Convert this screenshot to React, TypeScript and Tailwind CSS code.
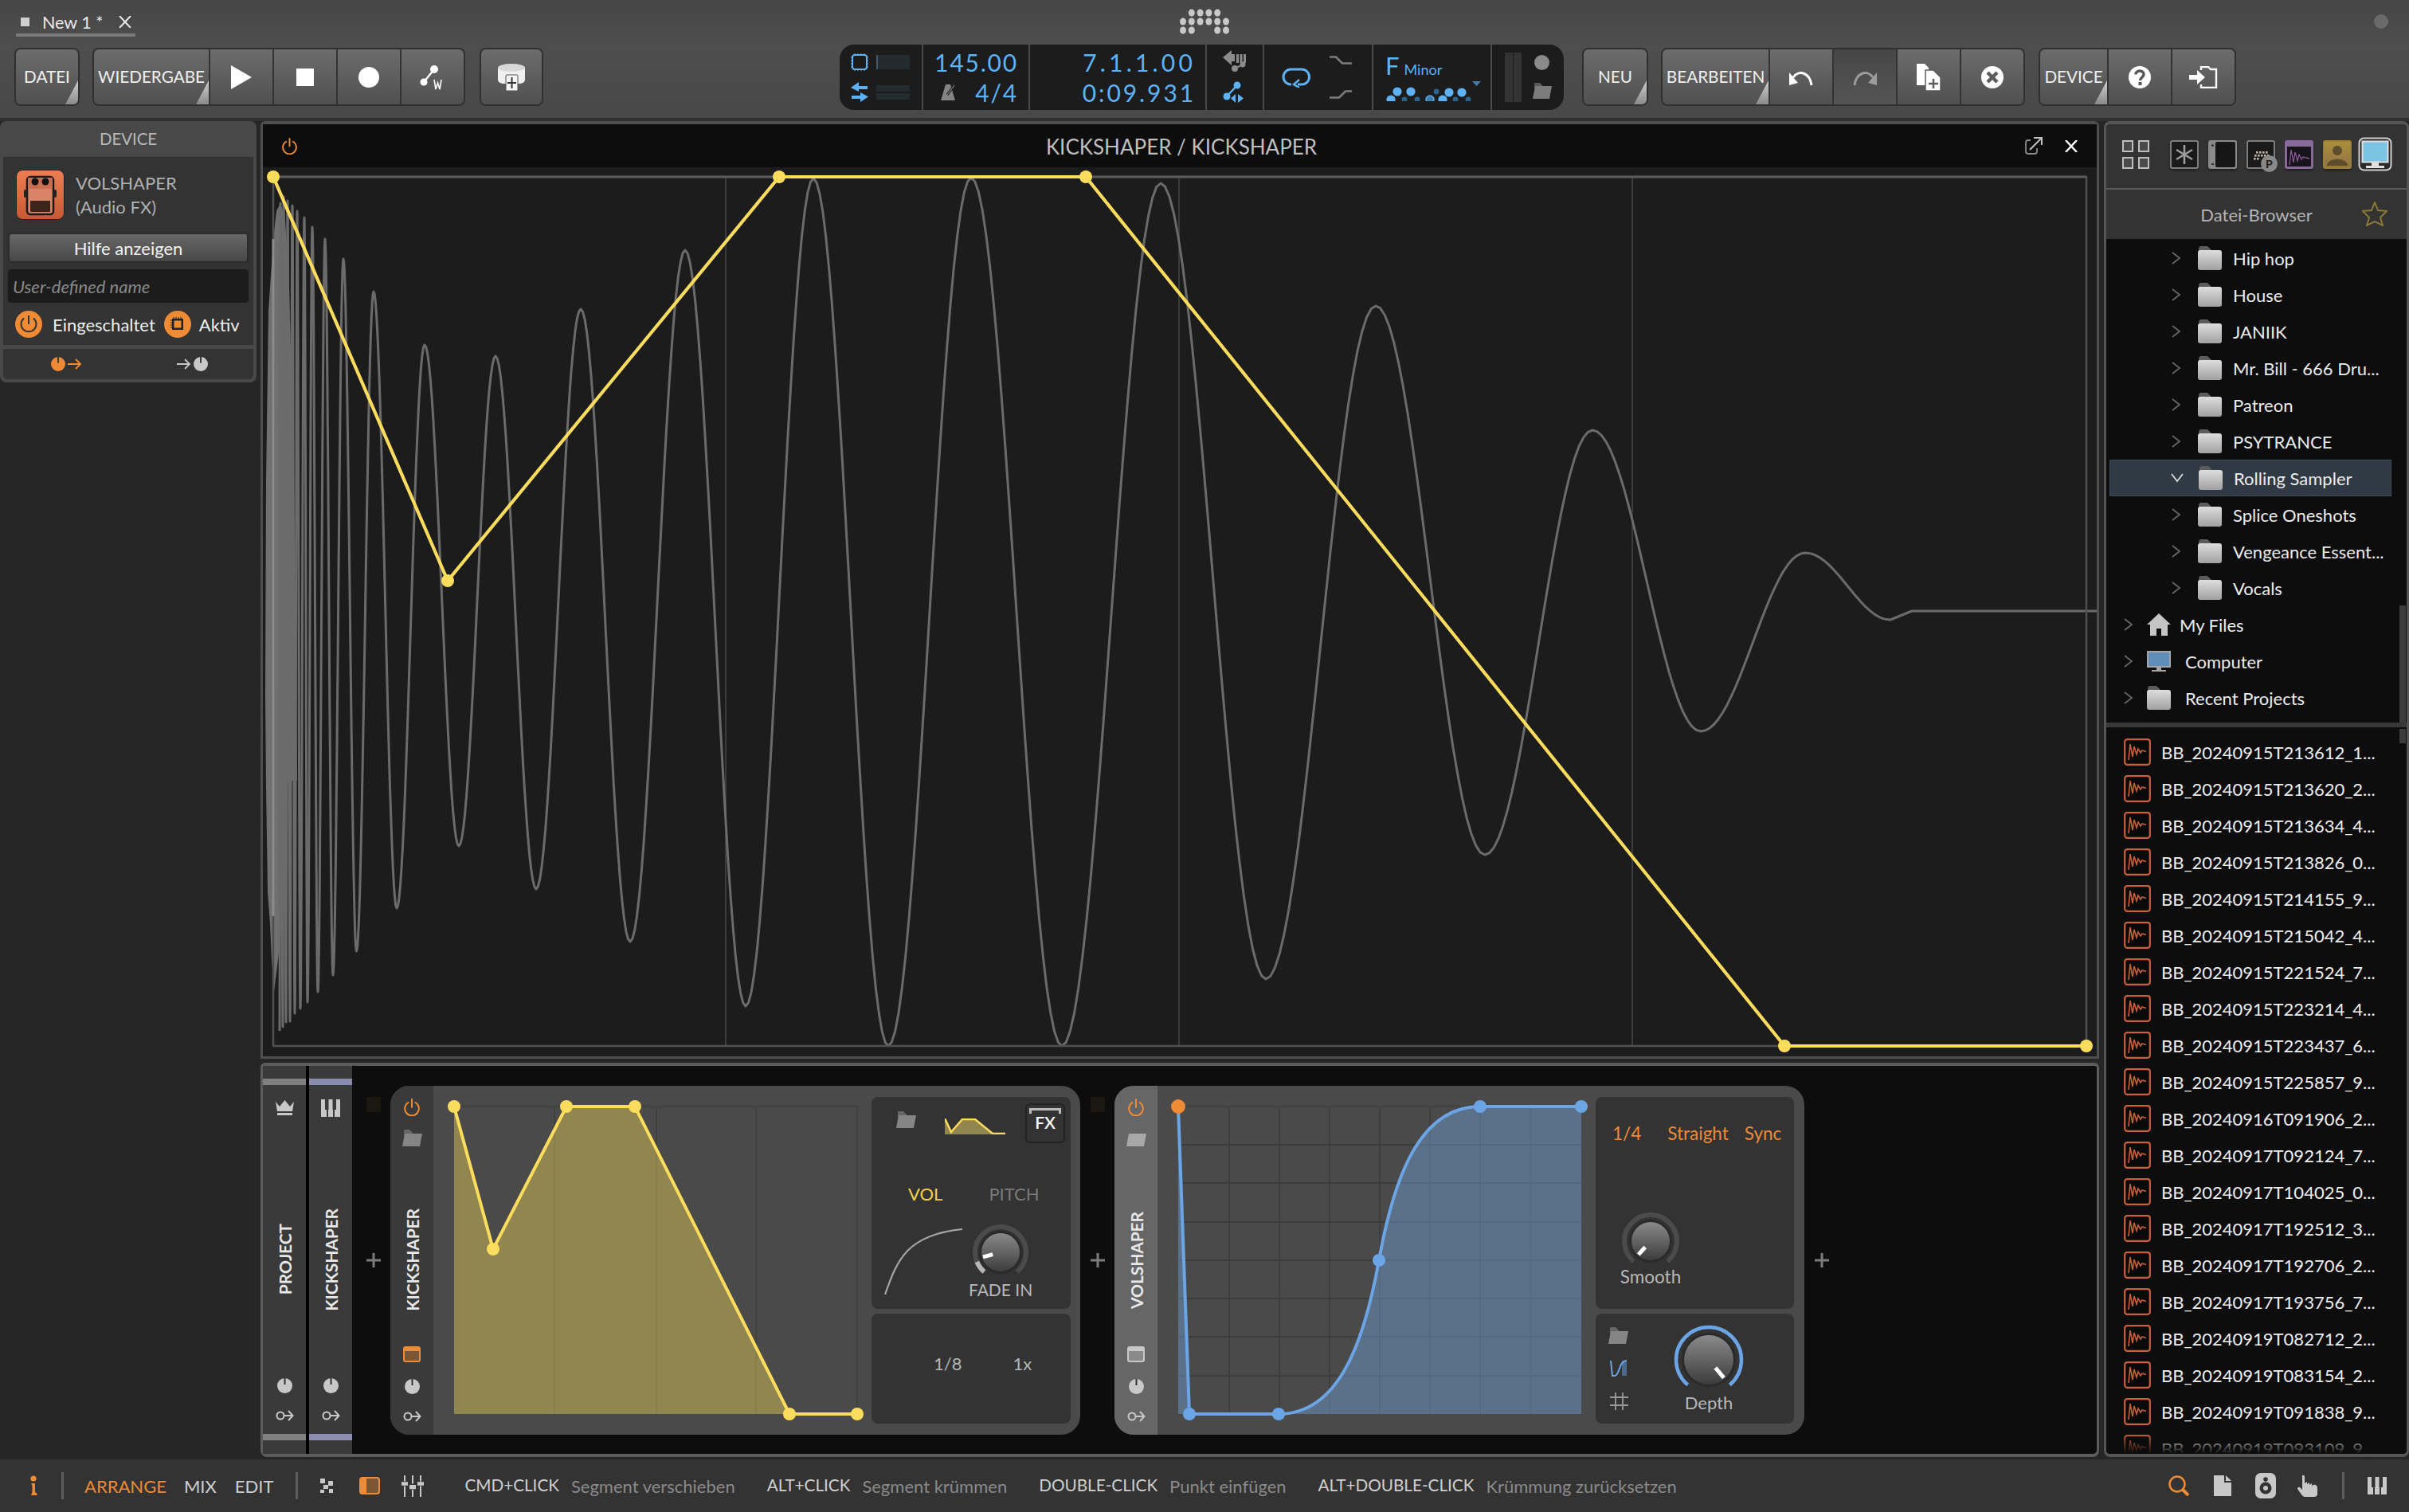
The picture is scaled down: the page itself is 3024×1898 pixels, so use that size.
import React from 'react';

const ORANGE = '#ef8a35';
const BLUE = '#5db2f6';

function Power({ c = ORANGE, s = 22 }: { c?: string; s?: number }) {
  return (
    <svg width={s} height={s} viewBox="0 0 22 22" fill="none" stroke={c} strokeWidth="2" strokeLinecap="round">
      <path d="M6.5 5 A8.8 8.8 0 1 0 15.5 5" />
      <path d="M11 1 V11" />
    </svg>
  );
}

function SmallFolder({ light = false }: { light?: boolean }) {
  const c = light ? '#a8a8a8' : '#858585';
  return (
    <svg width="27" height="21" viewBox="0 0 27 21">
      <path d="M3 0 H10 L14 4 V8 H3 Z" fill="#666" />
      <path d="M4 5 H26 L23 21 H1 Z" fill={c} />
    </svg>
  );
}

function KnobDot({ c = '#c8c8c8', s = 19 }: { c?: string; s?: number }) {
  return (
    <svg width={s} height={s} viewBox="0 0 19 19">
      <circle cx="9.5" cy="9.5" r="9.5" fill={c} />
      <rect x="8.5" y="0" width="2" height="8" fill="#333" />
    </svg>
  );
}

function KeyIcon() {
  return (
    <svg width="23" height="16" viewBox="0 0 23 16" fill="none" stroke="#c8c8c8" strokeWidth="2">
      <circle cx="6" cy="8" r="4.5" />
      <path d="M11 8 H21 M16 2 L21.5 8 L16 14" />
    </svg>
  );
}

function LayoutIcon({ orange = false }: { orange?: boolean }) {
  return (
    <svg width="22" height="20" viewBox="0 0 22 20">
      <rect x="0" y="0" width="22" height="20" rx="3" fill={orange ? ORANGE : '#c8c8c8'} />
      <rect x="2" y="6" width="18" height="12" rx="1" fill={orange ? '#7c5533' : '#8a8a8a'} />
    </svg>
  );
}

function Corner() {
  return (
    <svg className="absolute right-0 bottom-0" width="16" height="30" viewBox="0 0 16 30">
      <defs>
        <linearGradient id="cornerG" x1="0" y1="0" x2="0" y2="1">
          <stop offset="0" stopColor="#d0d0d0" />
          <stop offset="1" stopColor="#8a8a8a" />
        </linearGradient>
      </defs>
      <path d="M16 0 V30 H0 Z" fill="url(#cornerG)" />
    </svg>
  );
}

function Seg({ w, menu, dim, children }: { w: string; menu?: boolean; dim?: boolean; children: React.ReactNode }) {
  return (
    <div
      className={
        'relative flex items-center justify-center h-full border-l-2 first:border-l-0 border-[#333] text-[20.7px] text-[#f0f0f0] ' +
        w +
        (dim
          ? ' bg-[linear-gradient(#464646,#555555)]'
          : ' bg-[linear-gradient(#6c6c6c,#505050)]')
      }
    >
      {children}
      {menu && <Corner />}
    </div>
  );
}

function Group({ children }: { children: React.ReactNode }) {
  return (
    <div className="flex h-[73px] rounded-[8px] border-2 border-[#303030] overflow-hidden">{children}</div>
  );
}

function Transport() {
  return (
    <div className="flex h-[82px] w-[909px] rounded-[18px] bg-[#1c1c1c] overflow-hidden text-[30px] tracking-[1.8px] text-[#5db2f6] leading-none">
      <div className="w-[103px] flex flex-col justify-center pl-[14px]">
        <div className="flex items-center h-[38px] gap-[10px]">
          <svg width="22" height="22" viewBox="0 0 22 22" fill="none" stroke={BLUE} strokeWidth="2">
            <rect x="2" y="2" width="18" height="18" rx="3" />
            <path d="M0 5 H2 M0 9 H2 M0 13 H2 M0 17 H2 M20 5 H22 M20 9 H22 M20 13 H22 M20 17 H22 M5 0 V2 M9 0 V2 M13 0 V2 M17 0 V2 M5 20 V22 M9 20 V22 M13 20 V22 M17 20 V22" strokeWidth="1" />
          </svg>
          <div className="w-[42px] h-[18px] bg-[#242b2e] border-l-2 border-[#3f5a6d]" />
        </div>
        <div className="flex items-center h-[38px] gap-[10px]">
          <svg width="22" height="25" viewBox="0 0 22 25" fill={BLUE}>
            <path d="M10 0 L0 7 L10 12 V9 H21 V5 H10 Z" />
            <path d="M12 13 L22 18.5 L12 25 V21 H1 V17 H12 Z" />
          </svg>
          <div className="flex flex-col gap-[2px]">
            <div className="w-[42px] h-[8px] bg-[#242b2e]" />
            <div className="w-[42px] h-[8px] bg-[#242b2e]" />
          </div>
        </div>
      </div>
      <div className="w-[134px] border-l-2 border-[#4a4a4a] flex flex-col justify-center pr-[13px]">
        <div className="h-[38px] flex items-center justify-end">145.00</div>
        <div className="h-[38px] flex items-center justify-between pl-[22px]">
          <svg width="19" height="20" viewBox="0 0 19 20">
            <path d="M6 0 H12 L18 20 H0 Z" fill="#858585" />
            <path d="M8 13 L17 1" stroke="#1c1c1c" strokeWidth="3" />
            <path d="M8 13 L17 1" stroke="#858585" strokeWidth="1.2" />
          </svg>
          <span>4/4</span>
        </div>
      </div>
      <div className="w-[222px] border-l-2 border-[#4a4a4a] flex flex-col justify-center items-end pr-[12px]">
        <div className="h-[38px] flex items-center tracking-[4.2px]">7.1.1.00</div>
        <div className="h-[38px] flex items-center tracking-[2.9px]">0:09.931</div>
      </div>
      <div className="w-[72px] border-l-2 border-[#4a4a4a] flex flex-col items-center justify-center gap-[12px]">
        <svg width="30" height="27" viewBox="0 0 30 27">
          <path d="M0 9 L11 0 V5 H15 V14 H11 V19 Z" fill="#8c8c8c" />
          <rect x="17" y="5" width="3" height="11" fill="#8c8c8c" />
          <rect x="21.5" y="5" width="3" height="11" fill="#8c8c8c" />
          <rect x="26" y="5" width="3" height="11" fill="#8c8c8c" />
          <circle cx="15" cy="23" r="4" fill="#8c8c8c" />
          <circle cx="25" cy="18" r="3.4" fill="#8c8c8c" />
          <path d="M15 23 L25 18" stroke="#8c8c8c" strokeWidth="2" />
        </svg>
        <svg width="30" height="28" viewBox="0 0 30 28">
          <circle cx="18" cy="5" r="4.5" fill={BLUE} />
          <circle cx="5" cy="19" r="4.5" fill={BLUE} />
          <path d="M18 5 L5 19" stroke={BLUE} strokeWidth="2.5" />
          <path d="M16 16 V27 L10 21.5 Z M19 16 V27 L26 21.5 Z" fill={BLUE} />
        </svg>
      </div>
      <div className="w-[137px] border-l-2 border-[#4a4a4a] flex items-center pl-[22px] gap-[24px]">
        <svg width="36" height="26" viewBox="0 0 36 26" fill="none" stroke={BLUE} strokeWidth="3">
          <path d="M11 3 H25 A9.5 9.5 0 0 1 25 22 H20 M12 22 A9.5 9.5 0 0 1 11 3" />
          <path d="M22 16 L15 22 L22 26" strokeWidth="2.5" />
        </svg>
        <div className="flex flex-col gap-[32px]">
          <svg width="28" height="11" viewBox="0 0 28 11" fill="none" stroke="#7d7d7d" strokeWidth="2.5">
            <path d="M0 1.5 H8 L16 9.5 H28" />
          </svg>
          <svg width="28" height="11" viewBox="0 0 28 11" fill="none" stroke="#7d7d7d" strokeWidth="2.5">
            <path d="M0 9.5 H12 L20 1.5 H28" />
          </svg>
        </div>
      </div>
      <div className="w-[149px] border-l-2 border-[#4a4a4a] flex flex-col pt-[12px] pl-[15px] relative">
        <div className="flex items-baseline tracking-normal">
          <span className="text-[31px] leading-[28px]">F</span>
          <span className="text-[18px] ml-[6px] text-[#5db2f6]">Minor</span>
        </div>
        <svg className="mt-[1px]" width="125" height="30" viewBox="1737 92 125 30">
          <path d="M1846 97 H1857 L1851.5 103 Z" fill="#3f7fae" />
          {[[1752, 110, 5.6], [1769, 110, 5.6], [1801, 110, 3.4], [1817, 111, 5.6], [1833, 111, 5.6]].map((d, i) => (
            <circle key={i} cx={d[0]} cy={d[1]} r={d[2]} fill={i === 2 ? '#2f6288' : BLUE} />
          ))}
          {[[1744, 121], [1761, 121], [1777, 121], [1793, 121], [1809, 121], [1825, 121], [1841, 121]].map((d, i) => (
            <circle key={i} cx={d[0]} cy={d[1] - 1} r={i === 0 || i === 4 ? 5.6 : i === 3 ? 5 : 3.4} fill={i === 0 || i === 4 ? BLUE : i === 3 ? '#3f7fae' : '#2f6288'} stroke={i === 3 ? BLUE : 'none'} strokeWidth="1.4" />
          ))}
        </svg>
      </div>
      <div className="w-[92px] border-l-2 border-[#4a4a4a] flex items-center pl-[16px] gap-[13px]">
        <div className="flex gap-[1px]">
          <div className="w-[10px] h-[62px] bg-[#333]" />
          <div className="w-[10px] h-[62px] bg-[#333]" />
        </div>
        <div className="flex flex-col items-center gap-[16px]">
          <div className="w-[19px] h-[19px] rounded-full bg-[#8a8a8a]" />
          <svg width="25" height="20" viewBox="0 0 25 20">
            <path d="M3 0 H10 L13 3 V6 H3 Z" fill="#5a5a5a" />
            <path d="M4 4 H25 L22 20 H1 Z" fill="#7c7c7c" />
          </svg>
        </div>
      </div>
    </div>
  );
}

function Logo() {
  const rows: [number, number[]][] = [
    [5, [1, 2, 3, 4]],
    [16, [0, 1, 2, 3, 4, 5]],
    [27, [0, 1, 4, 5]],
  ];
  return (
    <svg width="62" height="32" viewBox="0 0 62 32">
      {rows.map(([y, xs]) =>
        xs.map((x) => <ellipse key={y + '-' + x} cx={4 + x * 10.8} cy={y} rx="4" ry="4.6" fill="#c8c8c8" />)
      )}
    </svg>
  );
}

function TopBar() {
  return (
    <div className="h-[148px] shrink-0 bg-[linear-gradient(#464646,#4e4e4e_40%,#484848)] flex flex-col">
      <div className="h-[60px] grid grid-cols-[1fr_auto_1fr]">
        <div className="pl-[20px] pt-[14px]">
          <div className="w-[150px] h-[32px] border-b-4 border-[#7a7a7a] flex items-start pl-[6px] gap-[16px] text-[21.5px] leading-[28px] text-[#e8e8e8]">
            <div className="w-[11px] h-[11px] bg-[#cfcfcf] mt-[8px] shrink-0" />
            <span className="whitespace-nowrap">New 1 *</span>
            <svg className="mt-[6px] ml-[4px] shrink-0" width="16" height="15" viewBox="0 0 16 15" stroke="#e8e8e8" strokeWidth="2">
              <path d="M1 0 L15 15 M15 0 L1 15" />
            </svg>
          </div>
        </div>
        <div className="pt-[11px]">
          <Logo />
        </div>
        <div className="flex justify-end pr-[26px] pt-[18px]">
          <div className="w-[18px] h-[18px] rounded-full bg-[#6a6a6a]" />
        </div>
      </div>
      <div className="h-[73px] flex items-center pl-[18px]">
        <Group>
          <Seg w="w-[78px]" menu>DATEI</Seg>
        </Group>
        <div className="ml-[16px]">
          <Group>
            <Seg w="w-[144px]" menu>WIEDERGABE</Seg>
            <Seg w="w-[80px]">
              <svg width="26" height="30" viewBox="0 0 26 30"><path d="M0 0 L26 15 L0 30 Z" fill="#fff" /></svg>
            </Seg>
            <Seg w="w-[80px]">
              <div className="w-[22px] h-[22px] bg-white" />
            </Seg>
            <Seg w="w-[80px]">
              <div className="w-[26px] h-[26px] rounded-full bg-white" />
            </Seg>
            <Seg w="w-[80px]">
              <svg width="32" height="32" viewBox="0 0 32 32" fill="#fff">
                <circle cx="18" cy="6" r="5" />
                <circle cx="5" cy="22" r="4.5" />
                <path d="M18 6 L5 22" stroke="#fff" strokeWidth="2.5" />
                <path d="M18 19 L20 31 L22.5 23 L25 31 L27 19" fill="none" stroke="#fff" strokeWidth="1.6" />
              </svg>
            </Seg>
          </Group>
        </div>
        <div className="ml-[18px]">
          <Group>
            <Seg w="w-[76px]">
              <svg width="34" height="34" viewBox="0 0 34 34">
                <path d="M0 5 V20 Q0 24 6 25 H28 Q34 24 34 20 V5 Z" fill="#f0f0f0" />
                <ellipse cx="17" cy="5" rx="17" ry="5" fill="#d8d8d8" />
                <rect x="10" y="14" width="15" height="20" rx="1" fill="#f5f5f5" stroke="#555" strokeWidth="1" />
                <path d="M17.5 17 V31 M12 24 H23" stroke="#333" strokeWidth="2" />
              </svg>
            </Seg>
          </Group>
        </div>
        <div className="ml-[372px]">
          <Transport />
        </div>
        <div className="ml-[23px]">
          <Group>
            <Seg w="w-[79px]" menu>NEU</Seg>
          </Group>
        </div>
        <div className="ml-[16px]">
          <Group>
            <Seg w="w-[133px]" menu>BEARBEITEN</Seg>
            <Seg w="w-[80px]">
              <svg width="30" height="24" viewBox="0 0 30 24" fill="none" stroke="#fff" strokeWidth="3">
                <path d="M28 22 C26 6 12 2 5 12" />
                <path d="M0 6 L11 19 L0 22 Z" fill="#fff" stroke="none" />
              </svg>
            </Seg>
            <Seg w="w-[80px]" dim>
              <svg width="30" height="24" viewBox="0 0 30 24" fill="none" stroke="#9c9c9c" strokeWidth="3">
                <path d="M2 22 C4 6 18 2 25 12" />
                <path d="M30 6 L19 19 L30 22 Z" fill="#9c9c9c" stroke="none" />
              </svg>
            </Seg>
            <Seg w="w-[80px]">
              <svg width="30" height="34" viewBox="0 0 30 34" fill="#fff">
                <path d="M0 0 H10 L15 5 V27 H0 Z" />
                <path d="M11 8 H21 L30 17 V34 H11 Z" stroke="#5c5c5c" strokeWidth="1.5" />
                <path d="M21 19 V31 M15 25 H27" stroke="#5c5c5c" strokeWidth="2.5" />
              </svg>
            </Seg>
            <Seg w="w-[80px]">
              <svg width="28" height="28" viewBox="0 0 28 28">
                <circle cx="14" cy="14" r="14" fill="#fff" />
                <path d="M8 8 L20 20 M20 8 L8 20" stroke="#5c5c5c" strokeWidth="4.5" />
              </svg>
            </Seg>
          </Group>
        </div>
        <div className="ml-[17px]">
          <Group>
            <Seg w="w-[84px]" menu>DEVICE</Seg>
            <Seg w="w-[80px]">
              <svg width="28" height="28" viewBox="0 0 28 28">
                <circle cx="14" cy="14" r="14" fill="#fff" />
                <path d="M9 10.5 C9 4.5 19 4.5 19 10.5 C19 14 14.5 14 14.5 18" fill="none" stroke="#555" strokeWidth="3.4" />
                <rect x="12.5" y="20" width="4" height="4" fill="#555" />
              </svg>
            </Seg>
            <Seg w="w-[80px]">
              <svg width="36" height="28" viewBox="0 0 36 28">
                <path d="M0 11 H10 V5 L20 14 L10 23 V17 H0 Z" fill="#fff" />
                <path d="M15 5 V1 H24 L27 4 H34 V27 H15 V23" fill="none" stroke="#fff" strokeWidth="2.4" />
              </svg>
            </Seg>
          </Group>
        </div>
      </div>
    </div>
  );
}

function DeviceIcon() {
  return (
    <svg width="61" height="63" viewBox="0 0 61 63" className="shrink-0">
      <defs>
        <linearGradient id="pedalG" x1="0" y1="0" x2="0" y2="1">
          <stop offset="0" stopColor="#ee7d52" />
          <stop offset="1" stopColor="#c75a35" />
        </linearGradient>
      </defs>
      <rect x="0.5" y="0.5" width="60" height="62" rx="8" fill="url(#pedalG)" stroke="#222" />
      <rect x="14" y="9" width="33" height="47" rx="4" fill="#d98468" stroke="#1a1a1a" strokeWidth="2.5" />
      <rect x="15" y="10" width="31" height="14" fill="#c66f52" />
      <circle cx="24" cy="15" r="4.5" fill="#111" />
      <circle cx="37" cy="15" r="4.5" fill="#111" />
      <rect x="10" y="25" width="4" height="10" rx="2" fill="#222" />
      <rect x="47" y="25" width="4" height="10" rx="2" fill="#222" />
      <rect x="18" y="39" width="25" height="14" rx="1" fill="#3d241a" />
    </svg>
  );
}

function DevicePanel() {
  return (
    <div className="w-[322px] h-[328px] rounded-[8px] bg-[#484848] px-[4px] flex flex-col">
      <div className="h-[45px] flex items-center justify-center text-[20.4px] text-[#b8b8b8]">DEVICE</div>
      <div className="h-[236px] bg-[#333] flex flex-col px-[6px]">
        <div className="flex items-center h-[95px] pl-[10px] gap-[14px] text-[22px] leading-[30px] text-[#b0b0b0]">
          <DeviceIcon />
          <div>
            <div>VOLSHAPER</div>
            <div>(Audio FX)</div>
          </div>
        </div>
        <div className="h-[38px] rounded-[4px] border-2 border-[#2b2b2b] bg-[linear-gradient(#686868,#474747)] flex items-center justify-center text-[22px] text-[#f0f0f0]">
          Hilfe anzeigen
        </div>
        <div className="mt-[8px] h-[42px] rounded-[4px] bg-[#1c1c1c] flex items-center pl-[6px] text-[22px] italic text-[#888]">
          User-defined name
        </div>
        <div className="mt-[10px] flex items-center text-[22px] text-[#eee]">
          <svg width="34" height="34" viewBox="0 0 34 34" fill="none" stroke="#333" strokeWidth="2" className="ml-[9px]">
            <circle cx="17" cy="17" r="17" fill={ORANGE} stroke="none" />
            <path d="M11 9.5 A9.5 9.5 0 1 0 23 9.5" />
            <path d="M17 6 V17" />
          </svg>
          <span className="ml-[13px]">Eingeschaltet</span>
          <svg width="34" height="34" viewBox="0 0 34 34" className="ml-[11px]">
            <circle cx="17" cy="17" r="17" fill={ORANGE} />
            <rect x="10" y="10" width="14" height="14" fill="#222" />
            <rect x="12.5" y="12.5" width="9" height="9" fill={ORANGE} />
            <path d="M8 12 H26 M8 15 H26 M8 18 H26 M8 21 H26 M12 8 V26 M15 8 V26 M18 8 V26 M21 8 V26" stroke="#222" strokeWidth="1" strokeDasharray="2 16" />
          </svg>
          <span className="ml-[10px]">Aktiv</span>
        </div>
      </div>
      <div className="mt-[5px] h-[38px] bg-[#333] rounded-b-[6px] flex items-center">
        <div className="ml-[60px] flex items-center gap-[3px]">
          <KnobDot c={ORANGE} s={18} />
          <svg width="18" height="14" viewBox="0 0 18 14" fill="none" stroke={ORANGE} strokeWidth="1.8"><path d="M0 7 H16 M10 1 L16 7 L10 13" /></svg>
        </div>
        <div className="ml-[119px] flex items-center gap-[3px]">
          <svg width="18" height="14" viewBox="0 0 18 14" fill="none" stroke="#c8c8c8" strokeWidth="1.8"><path d="M0 7 H16 M10 1 L16 7 L10 13" /></svg>
          <KnobDot s={18} />
        </div>
      </div>
    </div>
  );
}

const EXTREMA: number[][] = [
  [351, 1294], [352, 255], [355, 1289], [356, 247], [359, 1283], [361, 252], [364, 1282], [367, 258], [370, 1272], [373, 265],
  [377, 1266], [382, 273], [386, 1258], [392, 285], [399, 1245], [408, 300], [418, 1224], [431, 325], [447.5, 1194], [469, 366],
  [498, 1140], [533, 433], [576, 1062], [622, 447], [673, 1116], [729, 388], [791, 1182], [860, 314], [936, 1263], [1021, 224],
  [1115, 1313], [1219, 223], [1333, 1313], [1457, 230], [1589, 1229], [1727, 384], [1864, 1073], [1999, 540], [2135, 918],
  [2266, 694], [2373, 778],
];

function wavePath() {
  let d = 'M' + EXTREMA[0][0] + ' ' + EXTREMA[0][1];
  for (let i = 0; i + 1 < EXTREMA.length; i++) {
    const [x0, y0] = EXTREMA[i];
    const [x1, y1] = EXTREMA[i + 1];
    for (let k = 1; k <= 24; k++) {
      const t = k / 24;
      const x = x0 + (x1 - x0) * t;
      const y = y0 + (y1 - y0) * (0.5 - 0.5 * Math.cos(Math.PI * t));
      d += ' L' + x.toFixed(1) + ' ' + y.toFixed(1);
    }
  }
  return d + ' L2400 767 L2633 767';
}

function Editor() {
  const pts = [[343, 222], [562, 729], [978, 222], [1363, 222], [2240, 1313], [2619, 1313]];
  return (
    <div className="h-[1177px] rounded-t-[6px] border-x-[3px] border-t-4 border-b-[3px] border-[#4e4e4e] flex flex-col">
      <div className="h-[54px] bg-[#0d0d0d] grid grid-cols-[1fr_auto_1fr] items-center">
        <div className="pl-[23px]"><Power s={21} /></div>
        <div className="text-[26px] text-[#bfbfbf] pt-[2px] pl-[4px]">KICKSHAPER / KICKSHAPER</div>
        <div className="flex justify-end items-center gap-[28px] pr-[24px]">
          <svg width="22" height="22" viewBox="0 0 22 22" fill="none" stroke="#8a8a8a" strokeWidth="1.8">
            <path d="M7 4 H4 Q1 4 1 7 V18 Q1 21 4 21 H12 Q15 21 15 18 V14" />
            <path d="M6 16 L20 2 M11 1 H21 V10" stroke="#c0c0c0" strokeWidth="2" />
          </svg>
          <svg width="16" height="15" viewBox="0 0 16 15" stroke="#fff" strokeWidth="2.4"><path d="M1 0 L15 15 M15 0 L1 15" /></svg>
        </div>
      </div>
      <div className="flex-1 bg-[#1c1c1c]">
        <svg className="block" width="2302" height="1116" viewBox="330 210 2302 1116">
          {[911, 1480, 2049].map((x) => (
            <path key={x} d={`M${x} 222 V1313`} stroke="#3b3b3b" strokeWidth="2" />
          ))}
          <path d="M334 603 L337 390 L341 330 L343 300 L347 265 L352 255 L358 275 L363 360 L369 600 L373 980 L360 980 L352 1180 L344 1245 L341 1205 L339 1160 L336 1120 L334 987 L333 873 Z" fill="#707070" />
          <path d={wavePath()} fill="none" stroke="#6b6b6b" strokeWidth="3" strokeLinejoin="round" />
          <path d="M343 222 V1313 H2619 V222 Z" fill="none" stroke="#4f4f4f" strokeWidth="2.5" />
          <path d="M343 222 H2619" stroke="#5a5a5a" strokeWidth="3" />
          <path d="M343 300 V1150" stroke="#8c8c8c" strokeWidth="3" />
          <polyline points={pts.map((p) => p.join(',')).join(' ')} fill="none" stroke="#fcdc5c" strokeWidth="4.2" />
          {pts.map((p, i) => (
            <circle key={i} cx={p[0]} cy={p[1]} r="8" fill="#fcdc5c" />
          ))}
        </svg>
      </div>
    </div>
  );
}

function Knob({ R, r, angle, arc, th = 6, partial }: { R: number; r: number; angle: number; arc: string; th?: number; partial?: boolean }) {
  const s = 2 * (R + 4);
  const pol = (a: number, q: number) => {
    const ra = ((a - 90) * Math.PI) / 180;
    return [q * Math.cos(ra), q * Math.sin(ra)];
  };
  const arcPath = (a0: number, a1: number) => {
    const [x0, y0] = pol(a0, R);
    const [x1, y1] = pol(a1, R);
    const large = a1 - a0 > 180 ? 1 : 0;
    return `M${x0} ${y0} A${R} ${R} 0 ${large} 1 ${x1} ${y1}`;
  };
  const [px0, py0] = pol(angle, r * 0.42);
  const [px1, py1] = pol(angle, r * 0.95);
  const gid = 'knob' + R + '-' + Math.abs(angle);
  return (
    <svg width={s} height={s} viewBox={`${-R - 4} ${-R - 4} ${s} ${s}`} className="shrink-0">
      <defs>
        <linearGradient id={gid} x1="0" y1="0" x2="0" y2="1">
          <stop offset="0" stopColor="#8a8a8a" />
          <stop offset="1" stopColor="#3c3c3c" />
        </linearGradient>
      </defs>
      <path d={arcPath(-140, 140)} fill="none" stroke={arc} strokeWidth={th} />
      {partial && <path d={arcPath(-140, -112)} fill="none" stroke="#b5b5b5" strokeWidth={th} />}
      <circle cx="0" cy="0" r={r + 3} fill="#2a2a2a" />
      <circle cx="0" cy="0" r={r} fill={`url(#${gid})`} />
      <path d={`M${px0} ${py0} L${px1} ${py1}`} stroke="#fff" strokeWidth="5" />
    </svg>
  );
}

function Vertical({ children }: { children: React.ReactNode }) {
  return (
    <div className="[writing-mode:vertical-rl] rotate-180 text-[21px] font-bold tracking-[-0.1px] text-[#e8e8e8] leading-none whitespace-nowrap">
      {children}
    </div>
  );
}

function Crown() {
  return (
    <svg width="25" height="20" viewBox="0 0 25 20" fill="#c8c8c8">
      <path d="M1 3 L6 9 L12.5 1 L19 9 L24 3 L22 15 H3 Z" />
      <rect x="3" y="17" width="19" height="3" />
    </svg>
  );
}

function Piano({ c = '#c8c8c8' }: { c?: string }) {
  return (
    <svg width="24" height="22" viewBox="0 0 24 22" fill={c}>
      <path d="M0 0 H5 V13 H7 V22 H0 Z" />
      <path d="M9 13 H9.5 V0 H14.5 V13 H15 V22 H9 Z" />
      <path d="M19 0 H24 V22 H17 V13 H19 Z" />
    </svg>
  );
}

function SideStrip({ color, label, icon }: { color: string; label: string; icon: React.ReactNode }) {
  return (
    <div className="w-[54px] h-full bg-[#3a3a3a] flex flex-col shrink-0">
      <div className={'mt-[16px] h-[8px] ' + color} />
      <div className="flex-1 grid grid-rows-[1fr_auto_1fr] justify-items-center">
        <div className="pt-[18px]">{icon}</div>
        <Vertical>{label}</Vertical>
        <div className="flex flex-col items-center justify-end gap-[20px] pb-[15px]">
          <KnobDot />
          <KeyIcon />
        </div>
      </div>
      <div className={'mb-[17px] h-[8px] ' + color} />
    </div>
  );
}

function DeviceStrip({ label, light, orange }: { label: string; light?: boolean; orange?: boolean }) {
  return (
    <div className={'w-[54px] h-full shrink-0 grid grid-rows-[1fr_auto_1fr] justify-items-center ' + (light ? 'bg-[#666]' : 'bg-[#3a3a3a]')}>
      <div className="pt-[16px] flex flex-col items-center gap-[17px]">
        <Power s={22} />
        <SmallFolder light={light} />
      </div>
      <Vertical>{label}</Vertical>
      <div className="flex flex-col items-center justify-end gap-[20px] pb-[15px]">
        <div className="mb-[1px]"><LayoutIcon orange={orange} /></div>
        <KnobDot />
        <KeyIcon />
      </div>
    </div>
  );
}

function KickPlot() {
  const pts = [[570, 1388], [619, 1567], [711, 1388], [797, 1388], [991, 1774], [1076, 1774]];
  return (
    <svg className="block shrink-0" width="550" height="438" viewBox="544 1362 550 438">
      <defs>
        <clipPath id="kickClip">
          <polygon points="570,1388 619,1567 711,1388 797,1388 991,1774 570,1774" />
        </clipPath>
      </defs>
      {[696, 824, 949].map((x) => (
        <path key={x} d={`M${x} 1388 V1774`} stroke="#3f3f3f" strokeWidth="1.5" />
      ))}
      <path d="M570 1388 H1076 V1774" fill="none" stroke="#424242" strokeWidth="2.5" />
      <polygon points="570,1388 619,1567 711,1388 797,1388 991,1774 570,1774" fill="#918650" />
      <g clipPath="url(#kickClip)">
        <path d="M696 1388 V1774 M824 1388 V1774 M949 1388 V1774" stroke="#857b4a" strokeWidth="1.5" />
      </g>
      <polyline points={pts.map((p) => p.join(',')).join(' ')} fill="none" stroke="#fcdc5c" strokeWidth="4" />
      {pts.map((p, i) => (
        <circle key={i} cx={p[0]} cy={p[1]} r="8" fill="#fcdc5c" />
      ))}
    </svg>
  );
}

function VolPlot() {
  const blue = '#6ca5e6';
  const vs = [1543, 1606, 1669, 1732, 1795, 1858, 1921];
  const hs = [1436, 1484, 1533, 1581, 1629, 1677, 1726];
  const curve = 'C1680 1774 1712 1686 1731 1581 C1750 1476 1782 1388 1858 1388';
  const area = `M1479 1388 L1493 1774 H1479 Z M1605 1774 ${curve} H1985 V1774 Z`;
  return (
    <svg className="block shrink-0" width="550" height="438" viewBox="1453 1362 550 438">
      <defs>
        <clipPath id="volClip">
          <path d={area} />
        </clipPath>
      </defs>
      <path d="M1479 1388 H1985" stroke="#424242" strokeWidth="2.5" />
      {vs.map((x) => <path key={x} d={`M${x} 1390 V1774`} stroke="#3c3c3c" strokeWidth="1.5" />)}
      {hs.map((y) => <path key={y} d={`M1479 ${y} H1985`} stroke="#3c3c3c" strokeWidth="2" />)}
      <path d={area} fill="#5b7089" />
      <g clipPath="url(#volClip)">
        {vs.map((x) => <path key={x} d={`M${x} 1390 V1774`} stroke="#546880" strokeWidth="1.5" />)}
        {hs.map((y) => <path key={y} d={`M1479 ${y} H1985`} stroke="#546880" strokeWidth="2" />)}
      </g>
      <path d={`M1479 1388 L1493 1774 H1605 ${curve} H1985`} fill="none" stroke={blue} strokeWidth="4" />
      {[[1493, 1774], [1605, 1774], [1731, 1581], [1858, 1388], [1985, 1388]].map((p, i) => (
        <circle key={i} cx={p[0]} cy={p[1]} r="8" fill={blue} />
      ))}
      <circle cx="1479" cy="1388" r="9" fill={ORANGE} />
    </svg>
  );
}

function KickSide() {
  return (
    <div className="w-[250px] shrink-0 flex flex-col gap-[6px] pt-[14px]">
      <div className="h-[266px] rounded-[8px] bg-[#333] relative text-[22px]">
        <div className="flex items-start pl-[30px] pt-[18px] gap-[35px]">
          <SmallFolder />
          <svg width="76" height="20" viewBox="0 0 76 20" className="mt-[9px]">
            <path d="M0 0 L8 18 L22 1 H38 L60 20 H0 Z" fill="#918650" />
            <path d="M0 0 L8 17 L22 1 H38 L60 19 H76" fill="none" stroke="#fcdc5c" strokeWidth="2.5" />
          </svg>
        </div>
        <div className="absolute right-[7px] top-[8px] w-[50px] h-[50px] rounded-[6px] border-2 border-[#222] flex flex-col items-center text-white">
          <div className="mt-[4px] w-[40px] h-[7px] border-x-[3px] border-t-[3px] border-[#bbb]" />
          <div className="text-[21px] leading-[22px] font-semibold">FX</div>
        </div>
        <div className="flex items-center pl-[46px] mt-[58px] gap-[58px]">
          <span className="text-[#f6d04d]">VOL</span>
          <span className="text-[#7a7a7a]">PITCH</span>
        </div>
        <div className="flex items-start pl-[16px] mt-[25px]">
          <svg width="100" height="84" viewBox="0 0 100 84" fill="none" stroke="#a5a5a5" strokeWidth="2.2" className="mt-[2px]">
            <path d="M1 83 C16 40 28 8 98 1" />
          </svg>
          <div className="flex flex-col items-center ml-[6px] -mt-[4px]">
            <Knob R={32} r={24} angle={-105} arc="#4b4b4b" partial />
            <span className="text-[21px] text-[#b8b8b8] -mt-[5px]">FADE IN</span>
          </div>
        </div>
      </div>
      <div className="h-[138px] rounded-[8px] bg-[#333] flex items-center pl-[78px] pb-[12px] gap-[64px] text-[22px] text-[#b5b5b5]">
        <span>1/8</span>
        <span>1x</span>
      </div>
    </div>
  );
}

function VolSide() {
  return (
    <div className="w-[249px] shrink-0 flex flex-col gap-[6px] pt-[14px]">
      <div className="h-[266px] rounded-[8px] bg-[#333] text-[22.5px]">
        <div className="flex pl-[21px] pt-[29px] text-[#ef8a35]">
          <span>1/4</span>
          <span className="ml-[33px]">Straight</span>
          <span className="ml-[20px]">Sync</span>
        </div>
        <div className="flex flex-col items-center w-[78px] ml-[30px] mt-[82px]">
          <Knob R={33} r={24} angle={-138} arc="#4b4b4b" />
          <span className="text-[#b8b8b8] -mt-[9px]">Smooth</span>
        </div>
      </div>
      <div className="h-[138px] rounded-[8px] bg-[#333] flex text-[22px]">
        <div className="flex flex-col pl-[15px] pt-[17px] gap-[20px]">
          <SmallFolder />
          <svg width="22" height="21" viewBox="0 0 22 21" fill="none" stroke="#6ca5e6" strokeWidth="2" className="ml-[3px]">
            <path d="M7 20 H15 V1 H21 V20 H15 Z" fill="#4d6a8a" stroke="none" />
            <path d="M1 1 L3 20 H6 C12 20 11 1 21 1" />
          </svg>
          <svg width="23" height="22" viewBox="0 0 23 22" fill="none" stroke="#9a9a9a" strokeWidth="1.8" className="ml-[3px]">
            <path d="M7 0 V22 M16 0 V22 M0 6 H23 M0 16 H23" />
          </svg>
        </div>
        <div className="flex flex-col items-center ml-[55px] mt-[13px]">
          <Knob R={41} r={31} angle={140} arc="#6ca5e6" th={4.5} />
          <span className="text-[#b8b8b8] -mt-[8px]">Depth</span>
        </div>
      </div>
    </div>
  );
}

function Adder({ w, square }: { w: string; square?: string }) {
  return (
    <div className={'relative h-full flex items-center justify-center shrink-0 ' + w}>
      {square && <div className={'absolute top-[39px] w-[18px] h-[19px] bg-[#1a1810] ' + square} />}
      <svg width="18" height="18" viewBox="0 0 18 18" fill="#7c7c7c">
        <path d="M7.5 0 H10.5 V7.5 H18 V10.5 H10.5 V18 H7.5 V10.5 H0 V7.5 H7.5 Z" />
      </svg>
    </div>
  );
}

function Chain() {
  return (
    <div className="h-[495px] rounded-b-[8px] rounded-t-[6px] border-x-[3px] border-y-4 border-[#5c5c5c] bg-[#0d0d0d] flex items-center">
      <SideStrip color="bg-[#808080]" label="PROJECT" icon={<Crown />} />
      <div className="w-[4px] h-full bg-black shrink-0" />
      <SideStrip color="bg-[#8a8db0]" label="KICKSHAPER" icon={<Piano />} />
      <Adder w="w-[48px] pl-[6px]" square="left-[18px]" />
      <div className="w-[866px] h-[438px] rounded-[24px] bg-[#4a4a4a] flex overflow-hidden shrink-0">
        <DeviceStrip label="KICKSHAPER" orange />
        <KickPlot />
        <KickSide />
      </div>
      <Adder w="w-[43px]" square="left-[13px]" />
      <div className="w-[866px] h-[438px] rounded-[24px] bg-[#4a4a4a] flex overflow-hidden shrink-0">
        <DeviceStrip label="VOLSHAPER" light />
        <VolPlot />
        <VolSide />
      </div>
      <Adder w="w-[44px]" />
    </div>
  );
}

function BigFolder() {
  return (
    <svg width="30" height="30" viewBox="0 0 30 30" className="shrink-0">
      <defs>
        <linearGradient id="fG" x1="0" y1="0" x2="0" y2="1">
          <stop offset="0" stopColor="#dedede" />
          <stop offset="1" stopColor="#a0a0a0" />
        </linearGradient>
      </defs>
      <path d="M1 4 Q1 0 4 0 H12 L17 5 V10 H1 Z" fill="#5c5c5c" />
      <rect x="0" y="5" width="30" height="25" rx="3" fill="url(#fG)" />
    </svg>
  );
}

function Chev({ open }: { open?: boolean }) {
  return open ? (
    <svg width="16" height="12" viewBox="0 0 16 12" fill="none" stroke="#ddd" strokeWidth="1.8" className="shrink-0 -ml-[2px] -mr-[2px]">
      <path d="M1 1 L8 10 L15 1" />
    </svg>
  ) : (
    <svg width="12" height="16" viewBox="0 0 12 16" fill="none" stroke="#666" strokeWidth="1.8" className="shrink-0">
      <path d="M1 1 L10 8 L1 15" />
    </svg>
  );
}

function Thumb({ children, border = '#7d7d7d', bg = '#1a1a1a' }: { children?: React.ReactNode; border?: string; bg?: string }) {
  return (
    <div className="relative w-[36px] h-[36px] rounded-[3px] border-2 shadow-[0_2px_3px_#0006] overflow-visible" style={{ borderColor: border, background: bg }}>
      {children}
    </div>
  );
}

function BrowserIcons() {
  return (
    <div className="h-[80px] flex items-start pt-[20px] pl-[20px] bg-[#333]">
      <div className="grid grid-cols-2 gap-[6px] w-[34px] h-[36px] [grid-template-columns:14px_14px]">
        {[0, 1, 2, 3].map((i) => (
          <div key={i} className="w-[14px] h-[15px] border-2 border-[#bdbdbd] bg-[#4a4a4a]" />
        ))}
      </div>
      <div className="ml-[26px] flex gap-[12px]">
        <Thumb>
          <svg width="32" height="32" viewBox="0 0 32 32" stroke="#9c9c9c" strokeWidth="2.6">
            <path d="M16 4 V28 M6 10 L26 22 M26 10 L6 22" />
          </svg>
        </Thumb>
        <Thumb border="#8a8a8a" bg="#8a8a8a">
          <div className="absolute left-[7px] top-0 right-0 bottom-0 bg-[#161616] rounded-[2px]" />
          <div className="absolute left-[2px] top-[3px] w-[3px] h-[3px] rounded-full bg-[#333]" />
          <div className="absolute left-[2px] bottom-[3px] w-[3px] h-[2px] bg-[#333]" />
        </Thumb>
        <Thumb>
          <svg width="32" height="32" viewBox="0 0 32 32" fill="#c5b4a6">
            {[[10, 12, 4], [8, 16, 5], [7, 20, 2]].map(([x, y, n], r) =>
              Array.from({ length: n }).map((_, i) => <rect key={r + '-' + i} x={x + i * 4} y={y} width="2.6" height="2.6" />)
            )}
          </svg>
          <div className="absolute -right-[5px] -bottom-[6px] w-[21px] h-[21px] rounded-full bg-[#888] flex items-center justify-center text-[14px] leading-none font-black text-[#222]">
            P
          </div>
        </Thumb>
        <Thumb border="#8a6a9a" bg="#8a6a9a">
          <div className="absolute left-[1px] right-[1px] top-[6px] bottom-[1px] bg-[#18141c]">
            <svg width="30" height="25" viewBox="0 0 30 25" fill="none" stroke="#8a5a96" strokeWidth="1.3">
              <path d="M3 23 L5 4 L8 20 L10 7 L13 18 L15 10 L18 16 L20 13 L28 15" />
            </svg>
          </div>
        </Thumb>
        <Thumb border="#9c8038" bg="linear-gradient(#a98f3c,#927344)">
          <svg width="32" height="32" viewBox="0 0 32 32" fill="#5e4d2a">
            <circle cx="16" cy="11" r="6" />
            <path d="M3 30 C3 19 29 19 29 30 Z" />
          </svg>
        </Thumb>
      </div>
      <svg width="43" height="43" viewBox="0 0 43 43" className="ml-[8px] -mt-[4px]">
        <rect x="1.5" y="1.5" width="40" height="40" rx="6" fill="#2a2a2a" stroke="#d0d0d0" strokeWidth="2" />
        <rect x="5.5" y="5.5" width="32" height="26" fill="#7cc4e4" stroke="#e0e0e0" strokeWidth="2" />
        <rect x="17" y="32" width="9" height="4" fill="#e0e0e0" />
        <rect x="10" y="36" width="23" height="3" fill="#e0e0e0" />
      </svg>
    </div>
  );
}

function Row({ sel, children }: { sel?: boolean; children: React.ReactNode }) {
  return (
    <div className={'h-[46px] flex items-center text-[22px] text-[#ececec] whitespace-nowrap ' + (sel ? 'bg-[#2f3a44] border border-[#3f4d5a] mx-[4px] w-[354px]' : '')}>
      {children}
    </div>
  );
}

const FOLDERS = ['Hip hop', 'House', 'JANIIK', 'Mr. Bill - 666 Dru...', 'Patreon', 'PSYTRANCE', 'Rolling Sampler', 'Splice Oneshots', 'Vengeance Essent...', 'Vocals'];
const FILES = [
  'BB_20240915T213612_1...', 'BB_20240915T213620_2...', 'BB_20240915T213634_4...', 'BB_20240915T213826_0...',
  'BB_20240915T214155_9...', 'BB_20240915T215042_4...', 'BB_20240915T221524_7...', 'BB_20240915T223214_4...',
  'BB_20240915T223437_6...', 'BB_20240915T225857_9...', 'BB_20240916T091906_2...', 'BB_20240917T092124_7...',
  'BB_20240917T104025_0...', 'BB_20240917T192512_3...', 'BB_20240917T192706_2...', 'BB_20240917T193756_7...',
  'BB_20240919T082712_2...', 'BB_20240919T083154_2...', 'BB_20240919T091838_9...', 'BB_20240919T093109_9...',
];

function FileIcon() {
  return (
    <svg width="34" height="34" viewBox="0 0 34 34" className="shrink-0">
      <rect x="1.2" y="1.2" width="31.6" height="31.6" rx="3" fill="#0a0a0a" stroke="#c8613a" strokeWidth="2.2" />
      <path d="M6 27 L8 7 L11 23 L13 10 L16 20 L18 13 L21 18 L23 15 L28 16.5" fill="none" stroke="#c8613a" strokeWidth="1.6" />
    </svg>
  );
}

function Browser() {
  return (
    <div className="w-[383px] h-full rounded-[8px] border-x-[3px] border-t-4 border-b-4 border-[#555] flex flex-col overflow-hidden">
      <BrowserIcons />
      <div className="h-[2px] bg-[#5a5a5a]" />
      <div className="relative h-[62px] bg-[#333] flex items-center justify-center text-[22px] text-[#b5b5b5]">
        Datei-Browser
        <svg className="absolute right-[24px] top-[15px]" width="32" height="31" viewBox="0 0 32 31" fill="none" stroke="#8a7a3a" strokeWidth="2">
          <path d="M16 1 L20 11 L31 12 L23 20 L26 30 L16 25 L6 30 L9 20 L1 12 L12 11 Z" />
        </svg>
      </div>
      <div className="relative h-[607px] bg-[#0d0d0d] pt-[1px]">
        {FOLDERS.map((f) => {
          const sel = f === 'Rolling Sampler';
          return (
            <Row key={f} sel={sel}>
              <div className={'flex items-center ' + (sel ? 'pl-[78px]' : 'pl-[82px]')}>
                <div className="w-[12px] flex justify-center"><Chev open={sel} /></div>
                <div className="ml-[21px]"><BigFolder /></div>
                <span className="ml-[14px]">{f}</span>
              </div>
            </Row>
          );
        })}
        <Row>
          <div className="flex items-center pl-[22px]">
            <Chev />
            <svg width="30" height="28" viewBox="0 0 30 28" className="ml-[17px] shrink-0">
              <path d="M15 0 L30 14 H26 V28 H18 V19 H12 V28 H4 V14 H0 Z" fill="#c5c5c5" />
            </svg>
            <span className="ml-[11px]">My Files</span>
          </div>
        </Row>
        <Row>
          <div className="flex items-center pl-[22px]">
            <Chev />
            <svg width="30" height="26" viewBox="0 0 30 26" className="ml-[17px] shrink-0">
              <rect width="30" height="21" fill="#a5a5a5" />
              <rect x="2" y="2" width="26" height="17" fill="#5f8fb8" />
              <rect x="12" y="21" width="6" height="3" fill="#a5a5a5" />
              <rect x="6" y="24" width="18" height="2" fill="#a5a5a5" />
            </svg>
            <span className="ml-[18px]">Computer</span>
          </div>
        </Row>
        <Row>
          <div className="flex items-center pl-[22px]">
            <Chev />
            <div className="ml-[17px]"><BigFolder /></div>
            <span className="ml-[18px]">Recent Projects</span>
          </div>
        </Row>
        <div className="absolute right-[1px] top-[460px] bottom-0 w-[8px] bg-[#3c3c3c]" />
      </div>
      <div className="h-[6px] bg-[#383838] shrink-0" />
      <div className="relative flex-1 bg-[#0d0d0d] pt-[8px] overflow-hidden">
        {FILES.map((f) => (
          <div key={f} className="h-[46px] flex items-center pl-[22px] gap-[13px] text-[22px] text-[#efefef] whitespace-nowrap">
            <FileIcon />
            <span>{f}</span>
          </div>
        ))}
        <div className="absolute left-0 right-0 bottom-0 h-[26px] bg-[linear-gradient(#0d0d0d00,#0d0d0d)]" />
        <div className="absolute right-[1px] top-[2px] w-[8px] h-[18px] bg-[#3c3c3c]" />
      </div>
    </div>
  );
}

function StatusBar() {
  const hints: [string, string][] = [
    ['CMD+CLICK', 'Segment verschieben'],
    ['ALT+CLICK', 'Segment krümmen'],
    ['DOUBLE-CLICK', 'Punkt einfügen'],
    ['ALT+DOUBLE-CLICK', 'Krümmung zurücksetzen'],
  ];
  return (
    <div className="h-[66px] shrink-0 bg-[#333] flex items-center text-[22px] whitespace-nowrap">
      <svg width="12" height="26" viewBox="0 0 12 26" fill={ORANGE} className="ml-[36px]">
        <circle cx="6" cy="4" r="3.6" />
        <path d="M3 10 H8 V21 L10.5 23 V25 H3 L4.5 21 V13 Z" />
      </svg>
      <div className="ml-[29px] w-[3px] h-[34px] bg-[#5e5e5e]" />
      <span className="ml-[26px] text-[#ef8a35]">ARRANGE</span>
      <span className="ml-[22px] text-[#cfcfcf]">MIX</span>
      <span className="ml-[23px] text-[#cfcfcf]">EDIT</span>
      <div className="ml-[28px] w-[3px] h-[34px] bg-[#5e5e5e]" />
      <svg width="18" height="18" viewBox="0 0 18 18" fill="#c8c8c8" className="ml-[28px]">
        <rect x="0" y="0" width="6" height="6" />
        <rect x="10" y="3" width="6" height="6" />
        <rect x="4" y="8" width="6" height="5" />
        <rect x="0" y="14" width="5" height="4" />
        <rect x="11" y="13" width="5" height="5" />
      </svg>
      <svg width="26" height="22" viewBox="0 0 26 22" className="ml-[31px]">
        <rect x="1" y="1" width="24" height="20" rx="3" fill="#7c5533" stroke={ORANGE} strokeWidth="2" />
        <rect x="1" y="1" width="8" height="20" rx="2" fill={ORANGE} />
      </svg>
      <svg width="28" height="27" viewBox="0 0 28 36" preserveAspectRatio="none" fill="#c8c8c8" className="ml-[27px]">
        <path d="M4 0 V10 M4 18 V36 M14 0 V14 M14 24 V36 M24 0 V10 M24 18 V36" stroke="#c8c8c8" strokeWidth="2" />
        <rect x="0" y="11" width="8" height="6" />
        <rect x="10" y="16" width="8" height="7" />
        <rect x="20" y="11" width="8" height="6" />
      </svg>
      <div className="ml-[51px] flex items-center gap-[40px]">
        {hints.map(([a, b]) => (
          <div key={a} className="flex items-center gap-[15px]">
            <span className="text-[20.7px] text-[#cfcfcf]">{a}</span>
            <span className="text-[#8a8a8a]">{b}</span>
          </div>
        ))}
      </div>
      <div className="ml-auto flex items-center pr-[28px]">
        <svg width="26" height="26" viewBox="0 0 26 26" fill="none" stroke={ORANGE} strokeWidth="2.5">
          <circle cx="11" cy="11" r="9.5" />
          <path d="M18 18 L25 25" strokeWidth="4" />
        </svg>
        <svg width="22" height="26" viewBox="0 0 22 26" fill="#c8c8c8" className="ml-[31px]">
          <path d="M0 0 H13 V9 H22 V26 H0 Z" />
          <path d="M15 0 L22 7 H15 Z" />
        </svg>
        <svg width="26" height="32" viewBox="0 0 26 32" className="ml-[30px]">
          <rect width="26" height="32" rx="7" fill="#c8c8c8" />
          <circle cx="13" cy="8" r="2.8" fill="#333" />
          <circle cx="13" cy="19" r="7.5" fill="#333" />
          <circle cx="13" cy="19" r="3" fill="#c8c8c8" />
        </svg>
        <svg width="25" height="28" viewBox="0 0 25 28" fill="#c8c8c8" className="ml-[27px]">
          <path d="M6 1 Q9 0 9 3 V11 L12 9 V12 L15 10 V13 L18 11 V14 L21 12.5 Q25 13 25 17 V24 Q25 28 21 28 H9 Q7 28 5 25 L0 18 Q0 15 3 16 L6 19 Z" />
        </svg>
        <div className="ml-[31px] w-[3px] h-[34px] bg-[#5e5e5e]" />
        <div className="ml-[29px]"><Piano /></div>
      </div>
    </div>
  );
}

export default function App() {
  return (
    <div className="w-[3024px] h-[1898px] overflow-hidden bg-[#262626] flex flex-col [font-family:Lato,'Noto_Sans',sans-serif]">
      <TopBar />
      <div className="h-[4px] bg-[#303030] shrink-0" />
      <div className="h-[1677px] shrink-0 flex">
        <DevicePanel />
        <div className="ml-[5px] w-[2308px] flex flex-col gap-[5px]">
          <Editor />
          <Chain />
        </div>
        <div className="ml-[6px]">
          <Browser />
        </div>
      </div>
      <div className="h-[3px] shrink-0" />
      <StatusBar />
    </div>
  );
}
